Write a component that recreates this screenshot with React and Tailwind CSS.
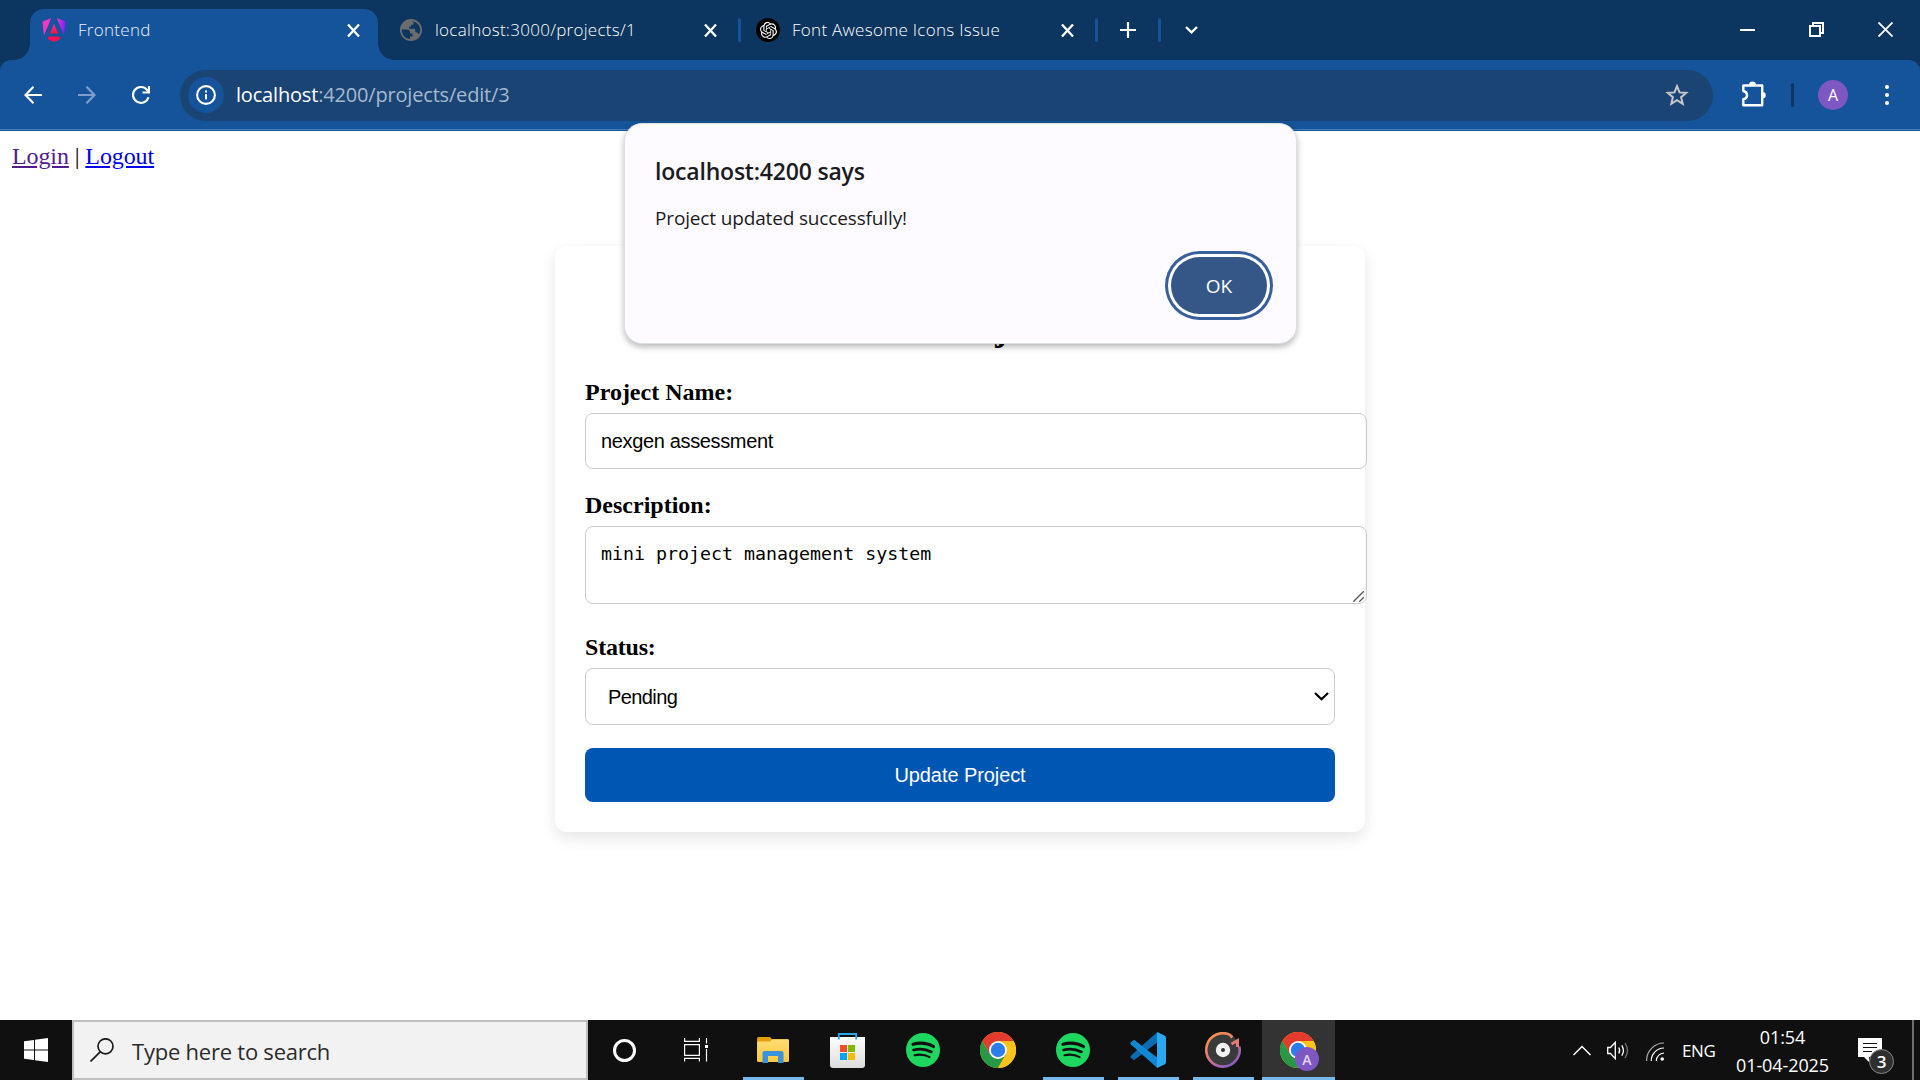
import React from "react";
import { SiOpenai } from "react-icons/si";

const UI = "font-['Open_Sans','Noto_Sans',sans-serif]";

function CloseIcon() {
  return (
    <svg className="h-[13px] w-[13px] shrink-0" viewBox="0 0 13 13" stroke="#fff" strokeWidth="2.300" fill="none">
      <path d="M1 0.500L12 12.500M12 0.500L1 12.500" />
    </svg>
  );
}

function AngularIcon() {
  return (
    <svg className="h-6 w-6 shrink-0" viewBox="0 0 24 24">
      <defs>
        <linearGradient id="ngA" x1="0" y1="0.2" x2="1" y2="0.5">
          <stop offset="0" stopColor="#f637d0" />
          <stop offset="0.4" stopColor="#c02be0" />
          <stop offset="1" stopColor="#7b1cff" />
        </linearGradient>
        <linearGradient id="ngB" x1="0" y1="0" x2="0" y2="1">
          <stop offset="0" stopColor="#ff2bb0" />
          <stop offset="1" stopColor="#ff1040" />
        </linearGradient>
      </defs>
      <path d="M9.2 0.2L0.500 3.4L1.900 17.4Z" fill="#f637c4" />
      <path d="M14.8 0.2L23.500 3.4L22.100 17.4Z" fill="url(#ngA)" />
      <path d="M12 5.8L16 15.4H8Z" fill="url(#ngB)" />
      <path d="M6.8 18.4H17.2L18.3 21L12 24L5.7 21Z" fill="#ff0f4d" />
    </svg>
  );
}

function GlobeIcon() {
  return (
    <svg className="h-[22px] w-[22px] shrink-0" viewBox="0 0 22 22">
      <circle cx="11" cy="11" r="11" fill="#6b6c6e" />
      <path
        d="M1.8 10.5H6.5C9 10.5 10 11.5 10 13.2V14.5H12.5V17.5H10V20C5 19.6 1.6 15.500 1.800 10.500ZM12.600 2.200C17 3 20.200 6.500 20.200 11C20.200 12.800 19.500 14.500 18.800 15.500C18.300 14 17.300 13.300 16 13.300H15.300V11.200C15.300 10.300 14.700 9.800 13.900 9.800H9V7.800H11V5.800H12.600C13.400 5.800 13.700 5 13.700 4.500Z"
        fill="#0c3560"
      />
    </svg>
  );
}

function KnotIcon() {
  return (
    <div className="flex h-6 w-6 shrink-0 items-center justify-center rounded-full bg-black">
      <SiOpenai className="h-[17px] w-[17px] text-white" />
    </div>
  );
}

function Separator() {
  return <div className="h-6 w-[3px] shrink-0 rounded-full bg-[#15539a]" />;
}

function TabStrip() {
  return (
    <div className="flex h-[60px] bg-[#0c3560]">
      <div className="relative ml-[30px] mt-[9px] flex h-[51px] w-[348px] shrink-0 rounded-t-[14px] bg-[#15539a] pt-[9px]">
        <div className="absolute -left-4 bottom-0 h-4 w-4 bg-[radial-gradient(circle_at_0_0,transparent_15.5px,#15539a_16px)]" />
        <div className="absolute -right-4 bottom-0 h-4 w-4 bg-[radial-gradient(circle_at_100%_0,transparent_15.5px,#15539a_16px)]" />
        <div className="flex h-6 w-full items-center pl-3 pr-[18px]">
          <AngularIcon />
          <span className={`${UI} ml-3 flex-1 text-[17px] font-light leading-6 tracking-[0.3px] text-[#eaf2ff]`}>Frontend</span>
          <CloseIcon />
        </div>
      </div>
      <div className="mt-[18px] flex h-6 items-center">
        <div className="flex w-[339px] items-center pl-[22px]">
          <GlobeIcon />
          <span className={`${UI} ml-[13px] flex-1 text-[17px] font-light leading-6 tracking-[0.280px] text-white`}>localhost:3000/projects/1</span>
          <CloseIcon />
        </div>
        <div className="ml-[21px] flex">
          <Separator />
        </div>
        <div className="flex w-[333px] items-center pl-[15px]">
          <KnotIcon />
          <span className={`${UI} ml-3 flex-1 text-[17px] font-light leading-6 tracking-[0.280px] text-white`}>Font Awesome Icons Issue</span>
          <CloseIcon />
        </div>
        <div className="ml-[21px] flex">
          <Separator />
        </div>
        <svg className="ml-[22px] h-4 w-4" viewBox="0 0 16 16" stroke="#fff" strokeWidth="2.200">
          <path d="M8 0V16M0 8H16" />
        </svg>
        <div className="ml-[22px] flex">
          <Separator />
        </div>
        <svg className="ml-[24px] h-2 w-[13px]" viewBox="0 0 13 8" fill="none" stroke="#fff" strokeWidth="2.300">
          <path d="M1 1L6.500 6.300L12 1" />
        </svg>
      </div>
      <div className="ml-auto mt-[22px] flex h-[15px] items-center gap-[54px] pr-[27px]">
        <div className="h-[2px] w-[15px] bg-white" />
        <svg className="h-[15px] w-[15px]" viewBox="0 0 15 15" fill="none" stroke="#fff" strokeWidth="2">
          <path d="M1 4H11V14H1ZM4 4V1H14V11H11" />
        </svg>
        <svg className="h-[15px] w-[15px]" viewBox="0 0 15 15" fill="none" stroke="#fff" strokeWidth="1.800">
          <path d="M0.500 0.500L14.500 14.500M14.500 0.500L0.500 14.500" />
        </svg>
      </div>
    </div>
  );
}

function Toolbar() {
  return (
    <div className="bg-[#0c3560]">
      <div className="flex h-[71px] items-center rounded-t-[11px] border-b border-[#15539a] bg-[#15539a] shadow-[inset_0_-1px_0_#4b7db5]">
        <svg className="ml-6 h-[18px] w-[18px] shrink-0" viewBox="0 0 18 18" fill="none" stroke="#fff" strokeWidth="2.200">
          <path d="M18 9H1.500M9.500 0.800L1.500 9L9.500 17.200" />
        </svg>
        <svg className="ml-9 h-[18px] w-[18px] shrink-0" viewBox="0 0 18 18" fill="none" stroke="#7d9fca" strokeWidth="2.200">
          <path d="M0 9H16.500M8.500 0.800L16.500 9L8.500 17.200" />
        </svg>
        <svg className="ml-9 h-[18px] w-[18px] shrink-0" viewBox="0 0 18 18" fill="none" stroke="#fff" strokeWidth="2.200">
          <path d="M16.500 11.200A7.900 7.900 0 1 1 14.900 3.700L16.800 5.700M17 0V6.500H10.500" />
        </svg>
        <div className="ml-[30px] flex h-[51px] w-[1533px] shrink-0 items-center rounded-full bg-[#1a4474] pl-2 pr-[24px]">
          <div className="flex h-9 w-9 shrink-0 items-center justify-center rounded-full bg-[#15539a]">
            <svg className="h-5 w-5" viewBox="0 0 20 20">
              <circle cx="10" cy="10" r="8.900" fill="none" stroke="#fff" strokeWidth="2.100" />
              <path d="M9 9H11V14.500H9ZM9 5.500H11V7.500H9Z" fill="#fff" />
            </svg>
          </div>
          <span className={`${UI} ml-3 flex-1 text-[20px] leading-6 tracking-[-0.180px] text-[#a5b9d1]`}>
            <span className="text-white">localhost</span>:4200/projects/edit/3
          </span>
          <svg className="h-6 w-6" viewBox="0 0 24 24" fill="none" stroke="#c7c7c7" strokeWidth="2">
            <path d="M12 3.200L14.500 9.400L21.200 9.900L16.100 14.200L17.700 20.800L12 17.200L6.300 20.800L7.900 14.200L2.800 9.900L9.500 9.400Z" />
          </svg>
        </div>
        <svg className="ml-[27px] h-[26px] w-[26px] shrink-0 -translate-y-px" viewBox="0 0 26 26" fill="none" stroke="#fff" strokeWidth="2.400">
          <path d="M3.300 4.500H22.200V24.200H3.300V18.300C8.300 17.300 8.300 11 3.300 10Z" strokeLinejoin="round" />
          <path d="M9 4A3.500 3.500 0 0 1 16 4ZM22.500 11A3 3 0 0 1 22.500 17.500Z" fill="#fff" stroke="none" />
        </svg>
        <div className="ml-[25px] h-6 w-[3px] shrink-0 rounded-full bg-[#0c3560]" />
        <div className={`${UI} ml-6 flex h-[30px] w-[30px] shrink-0 items-center justify-center rounded-full bg-[#7e57c2] text-[16px] text-white`}>A</div>
        <div className="ml-[37px] flex flex-col gap-1">
          <div className="h-1 w-1 rounded-full bg-white" />
          <div className="h-1 w-1 rounded-full bg-white" />
          <div className="h-1 w-1 rounded-full bg-white" />
        </div>
      </div>
    </div>
  );
}

function FieldLabel({ children }) {
  return <div className="h-7 font-['Liberation_Serif',serif] text-2xl font-bold leading-7 text-black">{children}</div>;
}

function Page() {
  return (
    <main className="h-[889px] bg-white">
      <nav className="h-[115px] pl-3 pt-[11px] font-['Liberation_Serif',serif] text-2xl leading-7 tracking-[-0.100px] text-black">
        <a className="text-[#551a8b] underline">Login</a> | <a className="text-[#0000ee] underline">Logout</a>
      </nav>
      <div className="mx-auto h-[586px] w-[810px] rounded-xl bg-white px-[30px] pt-[62px] shadow-[0_6px_15px_rgba(0,0,0,0.1)]">
        <h1 className="mr-1 h-[70px] text-center font-['Liberation_Serif',serif] text-[36px] font-bold leading-[41px] text-black">Edit Project</h1>
        <FieldLabel>Project Name:</FieldLabel>
        <div className="mt-[7px] flex h-14 w-[782px] items-center rounded-[8px] border border-[#ccc] px-[15px] font-['Liberation_Sans',sans-serif] text-[20px] tracking-[-0.350px] text-black">
          nexgen assessment
        </div>
        <div className="mt-[22px]">
          <FieldLabel>Description:</FieldLabel>
        </div>
        <div className="relative mt-[7px] h-[78px] w-[782px] rounded-[8px] border border-[#ccc] px-[15px] pt-[15px] font-['DejaVu_Sans_Mono',monospace] text-[18.300px] leading-6 text-black">
          mini project management system
          <svg className="absolute bottom-px right-[2px] h-[11px] w-[11px]" viewBox="0 0 11 11" stroke="#555" strokeWidth="1.300">
            <path d="M0.300 10.700L10.700 0.300M6.300 10.700L10.700 6.300" />
          </svg>
        </div>
        <div className="mt-[29px] tracking-[-0.200px]">
          <FieldLabel>Status:</FieldLabel>
        </div>
        <div className="mt-[7px] flex h-[57px] w-[750px] items-center justify-between rounded-[8px] border border-[#ccc] pl-[22px] pr-[5px] font-['Liberation_Sans',sans-serif] text-[20px] tracking-[-0.600px] text-black">
          Pending
          <svg className="h-[9px] w-[15px]" viewBox="0 0 15 9" fill="none" stroke="#000" strokeWidth="2.200">
            <path d="M1 1L7.500 7.300L14 1" />
          </svg>
        </div>
        <button className="mt-[23px] flex h-[54px] w-[750px] items-center justify-center rounded-[8px] bg-[#0056b3] font-['Liberation_Sans',sans-serif] text-[20px] tracking-[-0.080px] text-white">
          Update Project
        </button>
      </div>
    </main>
  );
}

function AlertDialog() {
  return (
    <div className={`${UI} absolute left-[624px] top-[123px] h-[221px] w-[673px] rounded-[18px] border border-[#dcdfe8] bg-[#fdfbff] px-[30px] pt-[31px] text-[#1b1b1f] shadow-[0_3px_6px_rgba(0,0,0,0.28)]`}>
      <div className="text-[23px] font-semibold leading-8 tracking-[-0.200px]">localhost:4200 says</div>
      <div className="mt-[19px] text-[19px] leading-6 tracking-[-0.150px]">Project updated successfully!</div>
      <div className="mt-[27px] flex justify-end">
        <button className="mr-[-1px] flex h-[57px] w-[96px] items-center justify-center rounded-full bg-[#355788] pt-px text-[19px] text-white shadow-[0_0_0_3px_#fff,0_0_0_6px_#385f9c]">OK</button>
      </div>
    </div>
  );
}

function FolderIcon() {
  return (
    <svg className="h-[26px] w-8" viewBox="0 0 32 26">
      <defs>
        <linearGradient id="fold" x1="0" y1="0" x2="0" y2="1">
          <stop offset="0" stopColor="#ffdc74" />
          <stop offset="1" stopColor="#fcc93d" />
        </linearGradient>
      </defs>
      <path d="M0 1.500Q0 0 1.500 0H13L15 2.300H31Q32 2.300 32 3.500V8H0Z" fill="#e3a008" />
      <path d="M0 6Q0 4.500 1.500 4.500H13L15.500 2.300H30.500Q32 2.300 32 3.800V23.500Q32 25 30.500 25H1.500Q0 25 0 23.500Z" fill="url(#fold)" />
      <path d="M7.500 14H24.500Q26.500 14 26.500 16V26H21V19H11V26H5.500V16Q5.500 14 7.500 14Z" fill="#3b93dc" />
    </svg>
  );
}

function StoreIcon() {
  return (
    <svg className="h-[35px] w-[35px]" viewBox="0 0 35 35">
      <defs>
        <linearGradient id="bag" x1="0" y1="0" x2="0" y2="1">
          <stop offset="0" stopColor="#fff" />
          <stop offset="1" stopColor="#dcdcdc" />
        </linearGradient>
      </defs>
      <path d="M0 4H35V32Q35 35 32 35H3Q0 35 0 32Z" fill="url(#bag)" />
      <path d="M8.800 6.500V1H26.200V6.500" fill="none" stroke="#22a7e8" strokeWidth="1.800" />
      <path d="M10 12H17V19H10Z" fill="#f25022" />
      <path d="M18 12H25V19H18Z" fill="#7fba00" />
      <path d="M10 20H17V27H10Z" fill="#00a4ef" />
      <path d="M18 20H25V27H18Z" fill="#ffb900" />
    </svg>
  );
}

function SpotifyIcon() {
  return (
    <svg className="h-[34px] w-[34px]" viewBox="0 0 34 34" fill="none" stroke="#101010" strokeLinecap="round">
      <circle cx="17" cy="17" r="17" fill="#1ed760" stroke="none" />
      <path d="M7 11.300C14 9.300 21.500 10 27.500 13.500" strokeWidth="3.100" />
      <path d="M7.500 17C14 15.300 20 16 25.500 19" strokeWidth="2.600" />
      <path d="M8.500 22.300C14 21 19 21.600 23.600 24.200" strokeWidth="2.100" />
    </svg>
  );
}

function ChromeIcon() {
  return (
    <svg className="h-9 w-9" viewBox="0 0 36 36">
      <circle cx="18" cy="18" r="18" fill="#fbbc05" />
      <path d="M2.400 9A18 18 0 0 1 33.600 9H18L10.200 22.500Z" fill="#e33b2e" />
      <path d="M2.400 9A18 18 0 0 0 18 36L25.800 22.500L18 18L10.200 22.500Z" fill="#279847" />
      <path d="M33.600 9A18 18 0 0 1 18 36L25.800 22.500V9Z" fill="#fcc41b" />
      <circle cx="18" cy="18" r="9" fill="#fff" />
      <circle cx="18" cy="18" r="7.200" fill="#2b7de9" />
    </svg>
  );
}

function CodeIcon() {
  return (
    <svg className="h-9 w-9" viewBox="0 0 36 36">
      <path d="M27 0.300L0.800 23.800Q0 24.800 0.800 25.800L3 27.600Q4 28.200 5 27.500L27 10.500Z" fill="#0b6cb3" />
      <path d="M27 35.700L0.800 12.200Q0 11.200 0.800 10.200L3 8.400Q4 7.800 5 8.500L27 25.500Z" fill="#1088d3" />
      <path d="M27 0L34.500 3.500Q36 4.200 36 6V30Q36 31.800 34.500 32.500L27 36Z" fill="#2aa9f2" />
    </svg>
  );
}

function GrooveIcon() {
  return (
    <svg className="h-9 w-9" viewBox="0 0 36 36">
      <defs>
        <linearGradient id="ring" x1="0" y1="0" x2="0.700" y2="1">
          <stop offset="0" stopColor="#ff9a3c" />
          <stop offset="0.500" stopColor="#dd7a78" />
          <stop offset="1" stopColor="#8a5cc4" />
        </linearGradient>
      </defs>
      <circle cx="18" cy="18" r="16.800" fill="#3a3a3a" />
      <path d="M26 3.300A16.700 16.700 0 1 0 34.300 14.500" fill="none" stroke="url(#ring)" strokeWidth="2.600" />
      <path d="M26.500 12L32.500 8.500V15" fill="none" stroke="#e07c74" strokeWidth="3" />
      <path d="M25.300 5.500L27.500 3.500" stroke="#e88a5c" strokeWidth="3" />
      <circle cx="18" cy="18" r="7.200" fill="#f2f2f2" />
      <circle cx="18" cy="18" r="2" fill="#333" />
    </svg>
  );
}

function TaskItem({ children, running }) {
  return (
    <div className="relative flex h-[60px] w-[75px] shrink-0 items-center justify-center">
      {children}
      {running && <div className="absolute bottom-0 left-2 h-[3px] w-[61px] bg-[#76b9ed]" />}
    </div>
  );
}

function Taskbar() {
  return (
    <footer className={`${UI} flex h-[60px] items-center bg-[#101010] text-white`}>
      <div className="flex w-[72px] shrink-0 items-center justify-center">
        <svg className="h-6 w-6" viewBox="0 0 24 24" fill="#fff">
          <path d="M0 3.300L10 1.900V11.400H0ZM11 1.700L24 0V11.400H11ZM0 12.400H10V22L0 20.700ZM11 12.400H24V24L11 22.200Z" />
        </svg>
      </div>
      <div className="flex h-[60px] w-[516px] shrink-0 items-center border-2 border-[#bfbfbf] bg-[#f2f2f2] pl-4">
        <svg className="h-6 w-6" viewBox="0 0 24 24" fill="none" stroke="#1a1a1a" strokeWidth="1.700">
          <circle cx="15.500" cy="8.300" r="7.500" />
          <path d="M10.200 13.800L0.500 23.500" />
        </svg>
        <span className="ml-[18px] pt-0.5 text-[22px] leading-7 tracking-[-0.230px] text-[#2b2b2b]">Type here to search</span>
      </div>
      <div className="flex w-[72px] shrink-0 items-center justify-center">
        <div className="h-[23px] w-[23px] rounded-full border-[3px] border-white" />
      </div>
      <div className="flex w-[75px] shrink-0 items-center justify-center pr-[3px]">
        <svg className="h-6 w-6" viewBox="0 0 24 24" fill="none" stroke="#fff" strokeWidth="1.200">
          <path d="M0.600 0V3.400H15.400V0M0.600 6.600H15.400V17.400H0.600ZM0.600 23.500V20.400H15.400V23.500M22.500 0V5.500M22.500 11V23.500" />
          <path d="M21 7H24V10H21Z" fill="#fff" stroke="none" />
        </svg>
      </div>
      <TaskItem running><FolderIcon /></TaskItem>
      <TaskItem><StoreIcon /></TaskItem>
      <TaskItem><SpotifyIcon /></TaskItem>
      <TaskItem><ChromeIcon /></TaskItem>
      <TaskItem running><SpotifyIcon /></TaskItem>
      <TaskItem running><CodeIcon /></TaskItem>
      <TaskItem running><GrooveIcon /></TaskItem>
      <div className="relative ml-[2px] flex h-[60px] w-[73px] shrink-0 items-center justify-center border-b-[3px] border-[#76b9ed] bg-[#333] pt-[3px] pr-px">
        <ChromeIcon />
        <div className="absolute left-[33px] top-[27px] flex h-6 w-6 items-center justify-center rounded-full bg-[#7e57c2] text-[14px] font-semibold text-[#e0d6f2]">A</div>
      </div>
      <svg className="ml-[238px] h-[11px] w-[18px] shrink-0" viewBox="0 0 18 11" fill="none" stroke="#fff" strokeWidth="1.500">
        <path d="M0.500 10L9 1.500L17.500 10" />
      </svg>
      <svg className="ml-4 h-[19px] w-[22px] shrink-0" viewBox="0 0 22 19" fill="none" stroke="#fff" strokeWidth="1.300">
        <path d="M0.700 6.500H3.500L8.300 1.300V17.700L3.500 12.500H0.700Z" />
        <path d="M11.800 6.500Q13.500 9.500 11.800 12.500M14.800 4.300Q18 9.500 14.800 14.700" />
        <path d="M18 2Q23 9.500 18 17" stroke="#777" />
      </svg>
      <svg className="ml-[17px] h-[19px] w-[18px] shrink-0 translate-y-px" viewBox="0 0 18 19" fill="none" stroke="#fff" strokeWidth="1.200">
        <path d="M0.600 19A17.500 17.500 0 0 1 18 1" stroke="#aaa" />
        <path d="M5.200 19A13 13 0 0 1 18 6" />
        <path d="M10.300 19A8 8 0 0 1 18 11" />
        <circle cx="16.200" cy="17" r="1.800" fill="#fff" stroke="none" />
      </svg>
      <span className="ml-[18px] w-[34px] shrink-0 pt-px text-[17px] leading-6 tracking-[-0.400px]">ENG</span>
      <div className="ml-[18px] flex w-[97px] shrink-0 flex-col items-center whitespace-nowrap pt-px text-[18px] leading-7 tracking-[-0.100px]">
        <span>01:54</span>
        <span>01-04-2025</span>
      </div>
      <div className="relative ml-[27px] h-6 w-6 shrink-0">
        <svg className="h-6 w-6" viewBox="0 0 24 24">
          <path d="M0 0H24V19H11V24L6 19H0Z" fill="#fff" />
          <path d="M5 5.500H19M5 9.500H19M5 13.500H14" stroke="#101010" strokeWidth="1.200" />
        </svg>
        <div className="absolute left-[11px] top-[11px] flex h-[25px] w-[25px] items-center justify-center rounded-full border border-[#8a8a8a] bg-[#2e2e2e] text-[17px] font-semibold">3</div>
      </div>
      <div className="ml-auto mr-[6px] h-[60px] w-[2px] bg-[#6e6e6e]" />
    </footer>
  );
}

export default function App() {
  return (
    <div className="relative flex h-[1080px] w-[1920px] flex-col overflow-hidden bg-white">
      <TabStrip />
      <Toolbar />
      <Page />
      <AlertDialog />
      <Taskbar />
    </div>
  );
}
